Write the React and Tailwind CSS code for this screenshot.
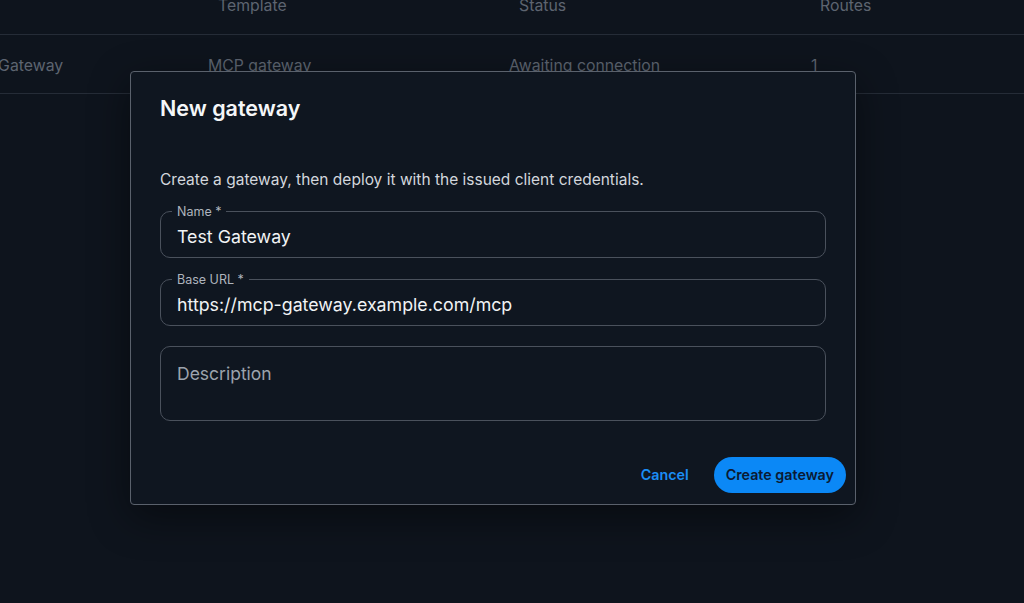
import React from 'react';

const columns = ['Template', 'Status', 'Routes'];

const Field = ({ label, value }) => (
  <fieldset className="border border-[#4a515c] rounded-[10px] pl-[11px] pr-[16px] pb-[3px]">
    <legend className="px-[5px] text-[12.5px] leading-[15px] text-[#aeb4bd]">{label}</legend>
    <input
      readOnly
      value={value}
      className="w-full h-[35px] pl-[5px] bg-transparent outline-none text-[17.8px] text-[#f1f3f5]"
    />
  </fieldset>
);

const App = () => {
  return (
    <div
      className="relative w-full h-[603px] overflow-hidden bg-[#0e141d]"
      style={{ fontFamily: 'Inter, "Liberation Sans", sans-serif' }}
    >
      {/* Table behind the dialog */}
      <div className="-mt-[23px] text-[15.8px] text-[#5d6470]">
        <div className="h-[58px] flex items-center border-b border-[#252c37]">
          <div className="w-[218px]" />
          <div className="w-[301px]">{columns[0]}</div>
          <div className="w-[301px]">{columns[1]}</div>
          <div>{columns[2]}</div>
        </div>
        <div className="h-[59px] pt-[3px] flex items-center border-b border-[#252c37]">
          <div className="w-[208px] overflow-visible whitespace-nowrap">
            <span className="-ml-[38px]">Test Gateway</span>
          </div>
          <div className="w-[301px]">MCP gateway</div>
          <div className="w-[302px]">Awaiting connection</div>
          <div>1</div>
        </div>
      </div>

      {/* Dialog */}
      <div className="absolute left-[130px] top-[71px] w-[726px] h-[434px] bg-[#0f1620] border border-[#5a616c] rounded-[4px] shadow-[0_12px_40px_rgba(0,0,0,0.45)] flex flex-col">
        <div className="px-[29px] pt-[22px]">
          <h2 className="text-[21.5px] leading-[28px] font-semibold text-[#f5f6f8]">New gateway</h2>
          <p className="mt-[47px] text-[15.5px] leading-[22px] text-[#d3d7dd]">
            Create a gateway, then deploy it with the issued client credentials.
          </p>
          <div className="mt-[13px] flex flex-col gap-[14px]">
            <Field label="Name *" value="Test Gateway" />
            <Field label="Base URL *" value="https://mcp-gateway.example.com/mcp" />
          </div>
          <div className="mt-[20px] h-[75px] border border-[#4a515c] rounded-[10px] px-[16px] pt-[14px] text-[17.5px] text-[#9ca3ad]">
            Description
          </div>
        </div>
        <div className="mt-auto flex items-center justify-end gap-[25px] pr-[9px] pb-[11px]">
          <button className="text-[14.3px] font-semibold text-[#1b8df5]">Cancel</button>
          <button className="h-[36px] px-[12px] rounded-full bg-[#0b88f6] text-[14.3px] font-semibold text-[#0b1a33]">
            Create gateway
          </button>
        </div>
      </div>
    </div>
  );
};

export default App;
